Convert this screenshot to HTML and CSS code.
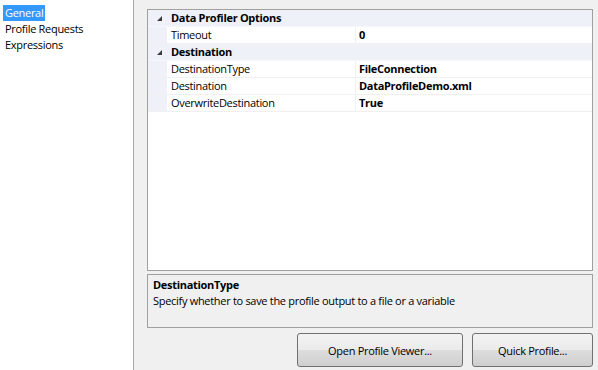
FILE: index.html
```html
<!DOCTYPE html>
<html>
<head>
    <title>Data Profiling Task Editor</title>
    <link rel="stylesheet" href="styles.css">
</head>
<body>
    <div class="sidebar">
        <div class="nav-item selected"><span>General</span></div>
        <div class="nav-item"><span>Profile Requests</span></div>
        <div class="nav-item"><span>Expressions</span></div>
    </div>
    <div class="main">
        <div class="prop-grid">
            <div class="cat-row">
                <div class="gutter"><span class="expander"></span></div>
                <div class="cat-name">Data Profiler Options</div>
            </div>
            <div class="prop-row">
                <div class="gutter"></div>
                <div class="prop-name">Timeout</div>
                <div class="prop-value">0</div>
            </div>
            <div class="cat-row">
                <div class="gutter"><span class="expander"></span></div>
                <div class="cat-name">Destination</div>
            </div>
            <div class="prop-row">
                <div class="gutter"></div>
                <div class="prop-name">DestinationType</div>
                <div class="prop-value">FileConnection</div>
            </div>
            <div class="prop-row">
                <div class="gutter"></div>
                <div class="prop-name">Destination</div>
                <div class="prop-value">DataProfileDemo.xml</div>
            </div>
            <div class="prop-row">
                <div class="gutter"></div>
                <div class="prop-name">OverwriteDestination</div>
                <div class="prop-value">True</div>
            </div>
        </div>
        <div class="desc-box">
            <div class="desc-title">DestinationType</div>
            <div class="desc-text">Specify whether to save the profile output to a file or a variable</div>
        </div>
        <div class="button-row">
            <button class="btn btn-viewer">Open Profile Viewer...</button>
            <button class="btn btn-quick">Quick Profile...</button>
        </div>
    </div>
</body>
</html>
```
FILE: styles.css
```css
html, body {
    height: 100%;
    margin: 0;
    padding: 0;
}
body {
    display: flex;
    width: 598px;
    height: 370px;
    overflow: hidden;
    background: #f0f0f0;
    font-family: 'Open Sans', 'Noto Sans', sans-serif;
    font-size: 11px;
    letter-spacing: -0.3px;
    color: #000;
}
.sidebar {
    width: 134px;
    background: #fff;
    border-right: 1px solid #a7a7a7;
    padding-top: 5px;
    box-sizing: border-box;
    flex-shrink: 0;
}
.nav-item {
    height: 16px;
    line-height: 16px;
    padding-left: 3px;
}
.nav-item span {
    padding: 0 2px;
    display: inline-block;
}
.nav-item.selected span {
    background: #3399ff;
    color: #fff;
}
.main {
    flex: 1;
    display: flex;
    flex-direction: column;
    padding: 9px 5px 3px 13px;
    gap: 3px;
}
.prop-grid {
    height: 262px;
    flex-shrink: 0;
    box-sizing: border-box;
    background: #fff;
    border: 1px solid #a0a0a0;
}
.cat-row, .prop-row {
    display: flex;
    height: 16px;
    line-height: 16px;
}
.cat-row {
    background: #eef1f7;
    border-bottom: 1px solid #f6f7fa;
}
.prop-row {
    border-bottom: 1px solid #f0f0f2;
}
.gutter {
    width: 19px;
    flex-shrink: 0;
    background: #eef1f7;
    display: flex;
    align-items: center;
    justify-content: center;
}
.expander {
    width: 0;
    height: 0;
    border-left: 5px solid transparent;
    border-bottom: 5px solid #3c3c3c;
    margin-left: 4px;
}
.cat-name {
    font-weight: bold;
    padding-left: 4px;
}
.prop-name {
    width: 184px;
    padding-left: 4px;
    border-right: 1px solid #f0f0f2;
}
.prop-value {
    flex: 1;
    font-weight: bold;
    padding-left: 3px;
}
.desc-box {
    height: 54px;
    flex-shrink: 0;
    box-sizing: border-box;
    border: 1px solid #a0a0a0;
    padding: 2px 5px;
    line-height: 16px;
}
.desc-title {
    font-weight: bold;
}
.button-row {
    display: flex;
    justify-content: flex-end;
    gap: 9px;
    margin-top: 2px;
}
.btn {
    height: 34px;
    font-family: inherit;
    font-size: 11px;
    letter-spacing: -0.3px;
    color: #000;
    border: 1px solid #707070;
    border-radius: 3px;
    background: linear-gradient(#f2f2f2 0%, #ebebeb 50%, #dddddd 51%, #cfcfcf 100%);
    padding: 0;
}
.btn-viewer {
    width: 166px;
}
.btn-quick {
    width: 121px;
}
```
